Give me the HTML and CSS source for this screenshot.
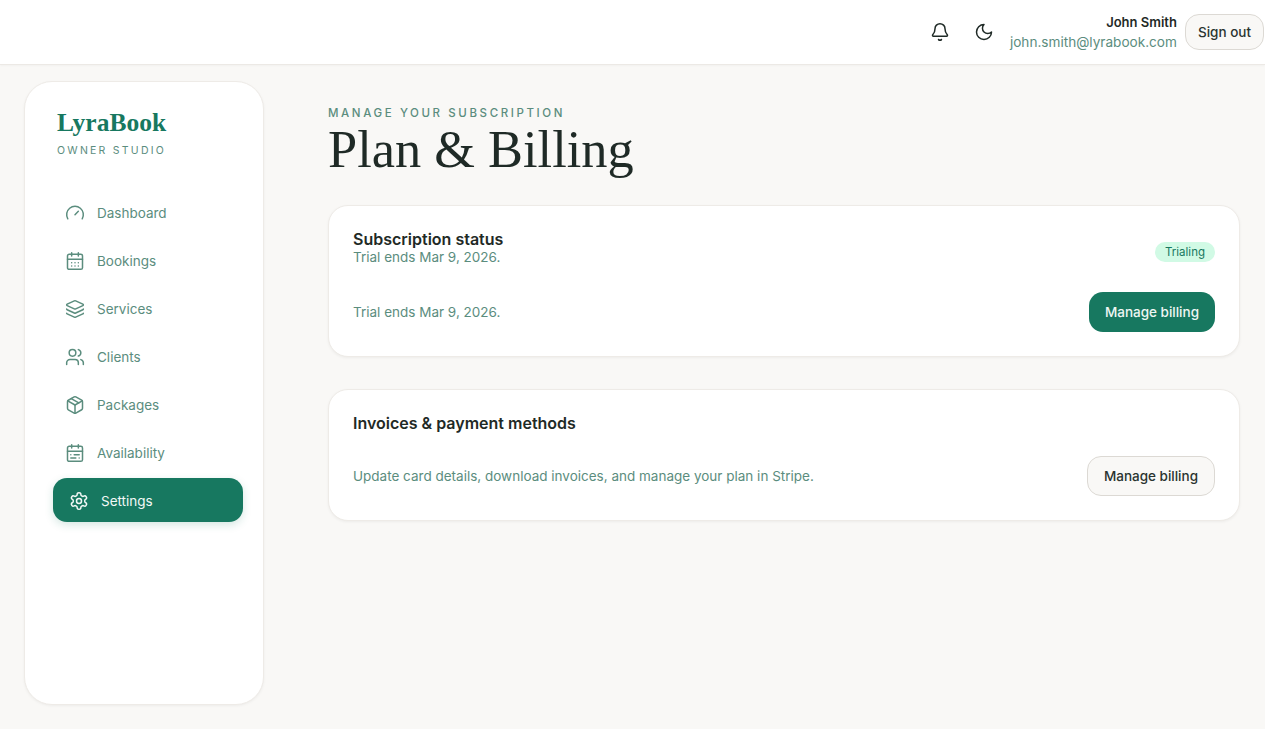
FILE: index.html
```html
<!DOCTYPE html>
<html lang="en">
<head>
<meta charset="utf-8">
<title>Plan &amp; Billing</title>
<link rel="stylesheet" href="styles.css">
</head>
<body>
<header class="topbar">
  <button class="icon-btn" aria-label="Notifications">
    <svg viewBox="0 0 24 24" class="i20"><path d="M10.268 21a2 2 0 0 0 3.464 0"/><path d="M3.262 15.326A1 1 0 0 0 4 17h16a1 1 0 0 0 .74-1.673C19.41 13.956 18 12.499 18 8A6 6 0 0 0 6 8c0 4.499-1.411 5.956-2.738 7.326"/></svg>
  </button>
  <button class="icon-btn" aria-label="Theme">
    <svg viewBox="0 0 24 24" class="i20"><path d="M12 3a6 6 0 0 0 9 9 9 9 0 1 1-9-9Z"/></svg>
  </button>
  <div class="user">
    <div class="user-name">John Smith</div>
    <div class="user-mail">john.smith@lyrabook.com</div>
  </div>
  <button class="btn signout">Sign out</button>
</header>
<div class="shell">
  <aside class="sidebar">
    <div class="brand">
      <div class="brand-name">LyraBook</div>
      <div class="brand-sub">OWNER STUDIO</div>
    </div>
    <nav class="nav">
      <a class="nav-item"><svg viewBox="0 0 24 24" class="i20"><path d="m12 14 4-4"/><path d="M3.34 19a10 10 0 1 1 17.32 0"/></svg>Dashboard</a>
      <a class="nav-item"><svg viewBox="0 0 24 24" class="i20"><path d="M8 2v4M16 2v4"/><rect x="3" y="4" width="18" height="18" rx="2"/><path d="M3 10h18"/><path d="M8 14h.01M12 14h.01M16 14h.01M8 18h.01M12 18h.01M16 18h.01"/></svg>Bookings</a>
      <a class="nav-item"><svg viewBox="0 0 24 24" class="i20"><path d="M12.83 2.18a2 2 0 0 0-1.66 0L2.6 6.08a1 1 0 0 0 0 1.83l8.58 3.91a2 2 0 0 0 1.66 0l8.58-3.9a1 1 0 0 0 0-1.83z"/><path d="M2 12a1 1 0 0 0 .58.91l8.6 3.91a2 2 0 0 0 1.65 0l8.58-3.9A1 1 0 0 0 22 12"/><path d="M2 17a1 1 0 0 0 .58.91l8.6 3.91a2 2 0 0 0 1.65 0l8.58-3.9A1 1 0 0 0 22 17"/></svg>Services</a>
      <a class="nav-item"><svg viewBox="0 0 24 24" class="i20"><path d="M16 21v-2a4 4 0 0 0-4-4H6a4 4 0 0 0-4 4v2"/><circle cx="9" cy="7" r="4"/><path d="M22 21v-2a4 4 0 0 0-3-3.87"/><path d="M16 3.13a4 4 0 0 1 0 7.75"/></svg>Clients</a>
      <a class="nav-item"><svg viewBox="0 0 24 24" class="i20"><path d="M11 21.73a2 2 0 0 0 2 0l7-4A2 2 0 0 0 21 16V8a2 2 0 0 0-1-1.73l-7-4a2 2 0 0 0-2 0l-7 4A2 2 0 0 0 3 8v8a2 2 0 0 0 1 1.73z"/><path d="M12 22V12"/><path d="m3.3 7 8.7 5 8.7-5"/><path d="m7.5 4.27 9 5.15"/></svg>Packages</a>
      <a class="nav-item"><svg viewBox="0 0 24 24" class="i20"><rect x="3" y="4" width="18" height="18" rx="2"/><path d="M16 2v4"/><path d="M3 10h18"/><path d="M8 2v4"/><path d="M17 14h-6"/><path d="M13 18H7"/><path d="M7 14h.01"/><path d="M17 18h.01"/></svg>Availability</a>
      <a class="nav-item active"><svg viewBox="0 0 24 24" class="i20"><path d="M12.22 2h-.44a2 2 0 0 0-2 2v.18a2 2 0 0 1-1 1.73l-.43.25a2 2 0 0 1-2 0l-.15-.08a2 2 0 0 0-2.73.73l-.22.38a2 2 0 0 0 .73 2.73l.15.1a2 2 0 0 1 1 1.72v.51a2 2 0 0 1-1 1.74l-.15.09a2 2 0 0 0-.73 2.73l.22.38a2 2 0 0 0 2.73.73l.15-.08a2 2 0 0 1 2 0l.43.25a2 2 0 0 1 1 1.73V20a2 2 0 0 0 2 2h.44a2 2 0 0 0 2-2v-.18a2 2 0 0 1 1-1.73l.43-.25a2 2 0 0 1 2 0l.15.08a2 2 0 0 0 2.73-.73l.22-.39a2 2 0 0 0-.73-2.73l-.15-.08a2 2 0 0 1-1-1.74v-.5a2 2 0 0 1 1-1.74l.15-.09a2 2 0 0 0 .73-2.73l-.22-.38a2 2 0 0 0-2.73-.73l-.15.08a2 2 0 0 1-2 0l-.43-.25a2 2 0 0 1-1-1.73V4a2 2 0 0 0-2-2z"/><circle cx="12" cy="12" r="3"/></svg>Settings</a>
    </nav>
  </aside>
  <main class="main">
    <div class="eyebrow">MANAGE YOUR SUBSCRIPTION</div>
    <h1 class="title">Plan &amp; Billing</h1>
    <section class="card">
      <div class="card-head">
        <div>
          <h2 class="card-title">Subscription status</h2>
          <div class="muted">Trial ends Mar 9, 2026.</div>
        </div>
        <span class="badge">Trialing</span>
      </div>
      <div class="card-row">
        <div class="muted">Trial ends Mar 9, 2026.</div>
        <button class="btn primary">Manage billing</button>
      </div>
    </section>
    <section class="card second">
      <div class="card-head">
        <h2 class="card-title">Invoices &amp; payment methods</h2>
      </div>
      <div class="card-row tight">
        <div class="muted">Update card details, download invoices, and manage your plan in Stripe.</div>
        <button class="btn">Manage billing</button>
      </div>
    </section>
  </main>
</div>
</body>
</html>
```
FILE: styles.css
```css
* { box-sizing: border-box; }
html, body { margin: 0; height: 100%; }
body {
  background: #f9f8f6;
  color: #1f2a26;
  font-family: "Inter", "Liberation Sans", sans-serif;
  font-size: 13.5px;
  overflow: hidden;
}
.i20 {
  width: 20px;
  height: 20px;
  flex: none;
  fill: none;
  stroke: currentColor;
  stroke-width: 1.8;
  stroke-linecap: round;
  stroke-linejoin: round;
}
.topbar {
  height: 65px;
  background: #fff;
  border-bottom: 1px solid #ece9e5;
  box-shadow: 0 1px 2px rgba(0,0,0,.03);
  display: flex;
  align-items: center;
  justify-content: flex-end;
  padding-right: 1px;
}
.icon-btn {
  width: 20px;
  height: 20px;
  padding: 0;
  border: 0;
  background: none;
  color: #1f2a26;
  margin-right: 24px;
}
.icon-btn + .icon-btn { margin-right: 16px; }
.user { text-align: right; margin-right: 8px; }
.user-name { font-size: 13px; font-weight: 600; line-height: 21px; }
.user-mail { font-size: 13.6px; line-height: 19px; color: #5b8d7e; }
.btn {
  font: inherit;
  height: 40px;
  padding: 0 16px;
  border: 1px solid #dcd9d4;
  border-radius: 14px;
  background: #f9f8f6;
  color: #2a3430;
  font-weight: 500;
}
.signout { height: 36px; padding: 0 12px; }
.btn.primary { background: #177860; border: 0; color: #eef6f3; }
.shell { display: flex; padding: 16px 25px 24px 24px; align-items: flex-start; }
.sidebar {
  width: 240px;
  height: 624px;
  flex: none;
  background: #fff;
  border: 1px solid #eeebe7;
  border-radius: 28px;
  box-shadow: 0 1px 3px rgba(0,0,0,.05);
  padding: 23px 24px;
}
.brand { padding: 2px 8px 0; }
.brand-name {
  font-family: "Liberation Serif", serif;
  font-weight: 700;
  font-size: 25.5px;
  line-height: 32px;
  color: #177860;
}
.brand-sub {
  margin-top: 5px;
  font-size: 10.5px;
  line-height: 14px;
  letter-spacing: 2.25px;
  color: #5b8d7e;
}
.nav { margin-top: 32px; display: flex; flex-direction: column; gap: 4px; }
.nav-item {
  height: 44px;
  padding: 2px 16px 0;
  display: flex;
  align-items: center;
  gap: 12px;
  border-radius: 14px;
  color: #5b8d7e;
}
.nav-item.active {
  background: #177860;
  color: #f2f8f6;
  transform: translateX(4px);
  box-shadow: 0 3px 8px rgba(23,120,96,.18);
}
.main { flex: 1; padding: 25px 0 0 64px; min-width: 0; }
.eyebrow {
  font-size: 11.5px;
  font-weight: 500;
  line-height: 14px;
  letter-spacing: 2.6px;
  color: #5b8d7e;
}
.title {
  margin: 4px 0 31px;
  font-family: "Liberation Serif", serif;
  font-weight: 400;
  font-size: 52.4px;
  line-height: 50px;
  color: #1f2a26;
}
.card {
  background: #fff;
  border: 1px solid #eeebe7;
  border-radius: 20px;
  box-shadow: 0 1px 3px rgba(0,0,0,.05);
  padding: 24px;
}
.second { margin-top: 32px; }
.card-head { display: flex; justify-content: space-between; align-items: center; }
.card-title { margin: 0; font-size: 16px; font-weight: 600; line-height: 18px; color: #1f2a26; }
.muted { line-height: 18px; color: #5b8d7e; }
.badge {
  margin-top: 8px;
  background: #d1fae5;
  color: #177860;
  font-size: 11.5px;
  line-height: 20px;
  padding: 0 10px;
  border-radius: 10px;
}
.card-row {
  margin-top: 26px;
  display: flex;
  justify-content: space-between;
  align-items: center;
}
.card-row.tight { margin-top: 24px; }
```
